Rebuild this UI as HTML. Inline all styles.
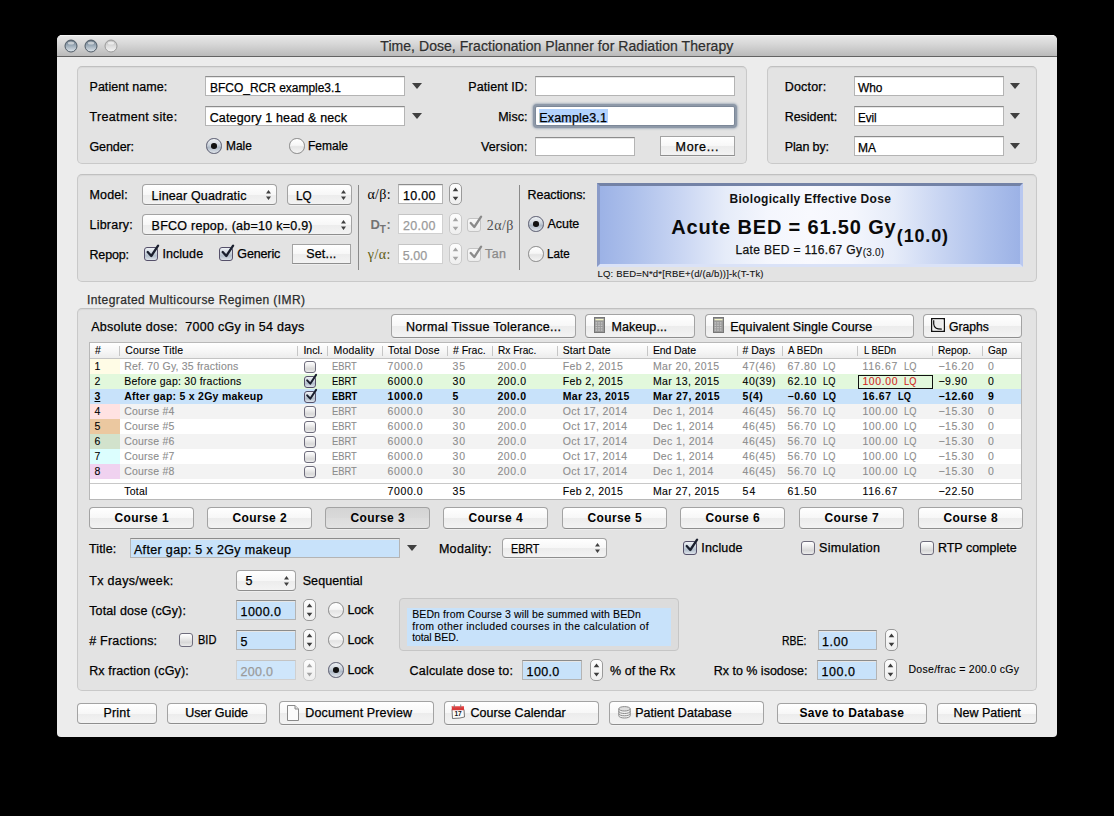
<!DOCTYPE html><html><head><meta charset="utf-8"><style>
html,body{margin:0;padding:0;background:#000;width:1114px;height:816px;overflow:hidden;position:relative;font-family:"Liberation Sans",sans-serif}
.t{position:absolute;white-space:pre;line-height:1;font-family:"Liberation Sans",sans-serif}
</style></head><body>
<div style="position:absolute;left:57px;top:35px;width:1000px;height:702px;background:#ececec;border-radius:5px 5px 4px 4px;overflow:hidden"><div style="position:absolute;left:0;top:0;width:1000px;height:21px;background:linear-gradient(#e9e9e9,#d6d6d6 45%,#bababa);border-bottom:1px solid #626262"></div></div>
<div style="position:absolute;left:60px;top:35px;width:994px;height:1px;background:rgba(255,255,255,.55)"></div>
<svg style="position:absolute;left:60px;top:35px" width="60" height="22"><defs><linearGradient id="tg" x1="0" y1="0" x2="0" y2="1"><stop offset="0" stop-color="#5f6e7c"/><stop offset="0.45" stop-color="#9aa9b6"/><stop offset="1" stop-color="#dfe6ec"/></linearGradient><linearGradient id="tw" x1="0" y1="0" x2="0" y2="1"><stop offset="0" stop-color="#b8b8b8"/><stop offset="0.5" stop-color="#dcdcdc"/><stop offset="1" stop-color="#f6f6f6"/></linearGradient></defs><circle cx="11" cy="11" r="6" fill="url(#tg)" stroke="#4e5a66" stroke-width="1"/><ellipse cx="11" cy="8" rx="3.2" ry="1.6" fill="#fff" opacity=".55"/><circle cx="31" cy="11" r="6" fill="url(#tg)" stroke="#4e5a66" stroke-width="1"/><ellipse cx="31" cy="8" rx="3.2" ry="1.6" fill="#fff" opacity=".55"/><circle cx="51" cy="11" r="6" fill="url(#tw)" stroke="#9a9a9a" stroke-width="1"/><ellipse cx="51" cy="8" rx="3.2" ry="1.6" fill="#fff" opacity=".6"/></svg>
<div class="t" style="top:39.00px;font-size:14px;color:#2e2e2e;letter-spacing:0.052px;-webkit-text-stroke:0.25px #2e2e2e;left:380.30px;text-shadow:0 1px 0 rgba(255,255,255,.45);">Time, Dose, Fractionation Planner for Radiation Therapy</div>
<div style="position:absolute;left:77px;top:66px;width:670px;height:98px;box-sizing:border-box;background:#e3e3e3;border:1px solid #c9c9c9;border-top-color:#c0c0c0;border-radius:5px;box-shadow:inset 0 1px 1px rgba(0,0,0,.05);"></div>
<div style="position:absolute;left:767px;top:66px;width:270px;height:98px;box-sizing:border-box;background:#e3e3e3;border:1px solid #c9c9c9;border-top-color:#c0c0c0;border-radius:5px;box-shadow:inset 0 1px 1px rgba(0,0,0,.05);"></div>
<div class="t" style="top:81.00px;font-size:12.5px;color:#000;letter-spacing:0.039px;-webkit-text-stroke:0.25px #000;left:89.50px;">Patient name:</div>
<div class="t" style="top:111.00px;font-size:12.5px;color:#000;letter-spacing:0.336px;-webkit-text-stroke:0.25px #000;left:89.50px;">Treatment site:</div>
<div class="t" style="top:141.00px;font-size:12.5px;color:#000;letter-spacing:-0.111px;-webkit-text-stroke:0.25px #000;left:89.50px;">Gender:</div>
<div style="position:absolute;left:205px;top:76px;width:200px;height:20px;box-sizing:border-box;background:#fff;border:1px solid #b4b4b4;border-top-color:#8c8c8c;box-shadow:inset 0 1px 0 #e6e6e6;"></div>
<div style="position:absolute;left:205px;top:106px;width:200px;height:20px;box-sizing:border-box;background:#fff;border:1px solid #b4b4b4;border-top-color:#8c8c8c;box-shadow:inset 0 1px 0 #e6e6e6;"></div>
<div class="t" style="top:82.00px;font-size:12.5px;color:#000;-webkit-text-stroke:0.25px #000;left:209.70px;transform:scaleX(0.9572);transform-origin:0 0;">BFCO_RCR example3.1</div>
<div class="t" style="top:112.00px;font-size:12.5px;color:#000;letter-spacing:0.152px;-webkit-text-stroke:0.25px #000;left:209.70px;">Category 1 head &amp; neck</div>
<svg style="position:absolute;left:411.5px;top:82.5px" width="10" height="7"><path d="M0 0 L10 0 L5 6 Z" fill="#404040"/></svg>
<svg style="position:absolute;left:411.5px;top:112.5px" width="10" height="7"><path d="M0 0 L10 0 L5 6 Z" fill="#404040"/></svg>
<div style="position:absolute;left:206.25px;top:138.25px;width:15.5px;height:15.5px;box-sizing:border-box;background:linear-gradient(#eef1f4,#d0d7df 40%,#aeb9c6 60%,#dfe4ea);border:1px solid #5a5c70;border-radius:50%;"></div>
<div style="position:absolute;left:211.2px;top:143.2px;width:5.600000000000023px;height:5.600000000000023px;box-sizing:border-box;background:#111;border-radius:50%;"></div>
<div class="t" style="top:140.00px;font-size:12.5px;color:#000;-webkit-text-stroke:0.25px #000;left:225.60px;transform:scaleX(0.9522);transform-origin:0 0;">Male</div>
<div style="position:absolute;left:289.05px;top:138.25px;width:15.5px;height:15.5px;box-sizing:border-box;background:linear-gradient(#ffffff,#f6f6f6 45%,#e4e4e4 55%,#f4f4f4);border:1px solid #8a8a8a;border-radius:50%;"></div>
<div class="t" style="top:140.00px;font-size:12.5px;color:#000;-webkit-text-stroke:0.25px #000;left:308.40px;transform:scaleX(0.9597);transform-origin:0 0;">Female</div>
<div class="t" style="top:81.00px;font-size:12.5px;color:#000;letter-spacing:0.074px;-webkit-text-stroke:0.25px #000;left:468.30px;">Patient ID:</div>
<div class="t" style="top:111.00px;font-size:12.5px;color:#000;letter-spacing:0.009px;-webkit-text-stroke:0.25px #000;left:498.20px;">Misc:</div>
<div class="t" style="top:141.00px;font-size:12.5px;color:#000;letter-spacing:0.191px;-webkit-text-stroke:0.25px #000;left:480.90px;">Version:</div>
<div style="position:absolute;left:535px;top:76px;width:200px;height:20px;box-sizing:border-box;background:#fff;border:1px solid #b4b4b4;border-top-color:#8c8c8c;box-shadow:inset 0 1px 0 #e6e6e6;"></div>
<div style="position:absolute;left:535px;top:106px;width:200px;height:20px;box-sizing:border-box;background:#fff;border:1px solid #b4b4b4;border-top-color:#8c8c8c;box-shadow:inset 0 1px 0 #e6e6e6;border-radius:2px;border-color:#7c8898;box-shadow:0 0 0 2px #8e99a8, 0 0 2px 3px rgba(130,145,165,.55);"></div>
<div style="position:absolute;left:538.7px;top:109px;width:69.59999999999991px;height:14.299999999999997px;box-sizing:border-box;background:#b3d3fd;"></div>
<div class="t" style="top:112.00px;font-size:12.5px;color:#000;letter-spacing:0.199px;-webkit-text-stroke:0.25px #000;left:539.20px;">Example3.1</div>
<div style="position:absolute;left:535px;top:137px;width:100px;height:19px;box-sizing:border-box;background:#fff;border:1px solid #b4b4b4;border-top-color:#8c8c8c;box-shadow:inset 0 1px 0 #e6e6e6;"></div>
<div style="position:absolute;left:660px;top:136px;width:75px;height:20px;box-sizing:border-box;background:linear-gradient(#ffffff,#f7f7f7 50%,#ececec 51%,#f3f3f3);border:1px solid #a3a3a3;border-bottom-color:#8e8e8e;border-radius:0;box-shadow:0 1px 0 rgba(255,255,255,.4);"></div>
<div class="t" style="top:141.00px;font-size:12.5px;color:#000;letter-spacing:0.650px;-webkit-text-stroke:0.25px #000;left:675.60px;">More...</div>
<div class="t" style="top:81.00px;font-size:12.5px;color:#000;letter-spacing:0.202px;-webkit-text-stroke:0.25px #000;left:784.70px;">Doctor:</div>
<div class="t" style="top:111.00px;font-size:12.5px;color:#000;letter-spacing:-0.038px;-webkit-text-stroke:0.25px #000;left:784.70px;">Resident:</div>
<div class="t" style="top:141.00px;font-size:12.5px;color:#000;letter-spacing:-0.124px;-webkit-text-stroke:0.25px #000;left:784.70px;">Plan by:</div>
<div style="position:absolute;left:854px;top:76px;width:150px;height:20px;box-sizing:border-box;background:#fff;border:1px solid #b4b4b4;border-top-color:#8c8c8c;box-shadow:inset 0 1px 0 #e6e6e6;"></div>
<div class="t" style="top:82.00px;font-size:12.5px;color:#000;-webkit-text-stroke:0.25px #000;left:858.20px;transform:scaleX(0.9532);transform-origin:0 0;">Who</div>
<svg style="position:absolute;left:1009.5px;top:82.5px" width="10" height="7"><path d="M0 0 L10 0 L5 6 Z" fill="#404040"/></svg>
<div style="position:absolute;left:854px;top:106px;width:150px;height:20px;box-sizing:border-box;background:#fff;border:1px solid #b4b4b4;border-top-color:#8c8c8c;box-shadow:inset 0 1px 0 #e6e6e6;"></div>
<div class="t" style="top:112.00px;font-size:12.5px;color:#000;-webkit-text-stroke:0.25px #000;left:858.20px;transform:scaleX(0.9284);transform-origin:0 0;">Evil</div>
<svg style="position:absolute;left:1009.5px;top:112.5px" width="10" height="7"><path d="M0 0 L10 0 L5 6 Z" fill="#404040"/></svg>
<div style="position:absolute;left:854px;top:136px;width:150px;height:20px;box-sizing:border-box;background:#fff;border:1px solid #b4b4b4;border-top-color:#8c8c8c;box-shadow:inset 0 1px 0 #e6e6e6;"></div>
<div class="t" style="top:142.00px;font-size:12.5px;color:#000;-webkit-text-stroke:0.25px #000;left:858.20px;transform:scaleX(0.9600);transform-origin:0 0;">MA</div>
<svg style="position:absolute;left:1009.5px;top:142.5px" width="10" height="7"><path d="M0 0 L10 0 L5 6 Z" fill="#404040"/></svg>
<div style="position:absolute;left:77px;top:174px;width:960px;height:108px;box-sizing:border-box;background:#e3e3e3;border:1px solid #c9c9c9;border-top-color:#c0c0c0;border-radius:5px;box-shadow:inset 0 1px 1px rgba(0,0,0,.05);"></div>
<div class="t" style="top:189.00px;font-size:12.5px;color:#000;letter-spacing:0.136px;-webkit-text-stroke:0.25px #000;left:89.50px;">Model:</div>
<div class="t" style="top:219.00px;font-size:12.5px;color:#000;letter-spacing:0.217px;-webkit-text-stroke:0.25px #000;left:89.50px;">Library:</div>
<div class="t" style="top:249.00px;font-size:12.5px;color:#000;letter-spacing:-0.162px;-webkit-text-stroke:0.25px #000;left:89.50px;">Repop:</div>
<div style="position:absolute;left:142px;top:184px;width:135px;height:21px;box-sizing:border-box;background:linear-gradient(#ffffff,#f7f7f7 50%,#ececec 51%,#f3f3f3);border:1px solid #a3a3a3;border-bottom-color:#8e8e8e;border-radius:4px;box-shadow:0 1px 0 rgba(255,255,255,.4);"></div>
<svg style="position:absolute;left:264.5px;top:188.5px" width="7" height="12"><path d="M1 4.5 L3.5 1 L6 4.5 Z M1 7.5 L3.5 11 L6 7.5 Z" fill="#404040"/></svg>
<div class="t" style="top:190.00px;font-size:12.5px;color:#000;letter-spacing:0.159px;-webkit-text-stroke:0.25px #000;left:151.60px;">Linear Quadratic</div>
<div style="position:absolute;left:287px;top:184px;width:65px;height:21px;box-sizing:border-box;background:linear-gradient(#ffffff,#f7f7f7 50%,#ececec 51%,#f3f3f3);border:1px solid #a3a3a3;border-bottom-color:#8e8e8e;border-radius:4px;box-shadow:0 1px 0 rgba(255,255,255,.4);"></div>
<svg style="position:absolute;left:339.5px;top:188.5px" width="7" height="12"><path d="M1 4.5 L3.5 1 L6 4.5 Z M1 7.5 L3.5 11 L6 7.5 Z" fill="#404040"/></svg>
<div class="t" style="top:190.00px;font-size:12.5px;color:#000;-webkit-text-stroke:0.25px #000;left:296.10px;transform:scaleX(0.9355);transform-origin:0 0;">LQ</div>
<div style="position:absolute;left:142px;top:214px;width:210px;height:21px;box-sizing:border-box;background:linear-gradient(#ffffff,#f7f7f7 50%,#ececec 51%,#f3f3f3);border:1px solid #a3a3a3;border-bottom-color:#8e8e8e;border-radius:4px;box-shadow:0 1px 0 rgba(255,255,255,.4);"></div>
<svg style="position:absolute;left:339.5px;top:218.5px" width="7" height="12"><path d="M1 4.5 L3.5 1 L6 4.5 Z M1 7.5 L3.5 11 L6 7.5 Z" fill="#404040"/></svg>
<div class="t" style="top:220.00px;font-size:12.5px;color:#000;letter-spacing:0.248px;-webkit-text-stroke:0.25px #000;left:151.60px;">BFCO repop. (ab=10 k=0.9)</div>
<div style="position:absolute;left:144px;top:247px;width:14px;height:14px;box-sizing:border-box;background:linear-gradient(#eef1f5,#d2dae3 35%,#b4c0cd 65%,#dde3ea);border:1px solid #55506a;border-radius:3px;"></div>
<svg style="position:absolute;left:144px;top:243px;overflow:visible" width="18" height="18"><path d="M3.70 9.00 L7.30 13.00 L14.10 2.70" fill="none" stroke="#1a1f2e" stroke-width="2.30" stroke-linecap="round" stroke-linejoin="round"/></svg>
<div class="t" style="top:248.00px;font-size:12.5px;color:#000;letter-spacing:0.065px;-webkit-text-stroke:0.25px #000;left:162.40px;">Include</div>
<div style="position:absolute;left:219px;top:247px;width:14px;height:14px;box-sizing:border-box;background:linear-gradient(#eef1f5,#d2dae3 35%,#b4c0cd 65%,#dde3ea);border:1px solid #55506a;border-radius:3px;"></div>
<svg style="position:absolute;left:219px;top:243px;overflow:visible" width="18" height="18"><path d="M3.70 9.00 L7.30 13.00 L14.10 2.70" fill="none" stroke="#1a1f2e" stroke-width="2.30" stroke-linecap="round" stroke-linejoin="round"/></svg>
<div class="t" style="top:248.00px;font-size:12.5px;color:#000;letter-spacing:-0.128px;-webkit-text-stroke:0.25px #000;left:237.30px;">Generic</div>
<div style="position:absolute;left:292px;top:244px;width:59px;height:20px;box-sizing:border-box;background:linear-gradient(#ffffff,#f7f7f7 50%,#ececec 51%,#f3f3f3);border:1px solid #a3a3a3;border-bottom-color:#8e8e8e;border-radius:0;box-shadow:0 1px 0 rgba(255,255,255,.4);"></div>
<div class="t" style="top:248.00px;font-size:12.5px;color:#000;letter-spacing:0.184px;-webkit-text-stroke:0.25px #000;left:306.20px;">Set...</div>
<div style="position:absolute;left:358px;top:185px;width:1px;height:85px;box-sizing:border-box;background:#8a8a8a;"></div>
<div class="t" style="top:188.00px;font-size:14px;color:#000;font-family:'Liberation Serif',serif;letter-spacing:0.288px;left:367.50px;">α/β:</div>
<div class="t" style="top:218.00px;font-size:13px;color:#737373;font-weight:bold;left:370.50px;">D</div>
<div class="t" style="top:225.00px;font-size:10px;color:#737373;font-weight:bold;left:379.80px;">T</div>
<div class="t" style="top:219.00px;font-size:12.5px;color:#737373;font-weight:bold;left:386.50px;">:</div>
<div class="t" style="top:248.00px;font-size:14px;color:#5e5c12;font-family:'Liberation Serif',serif;letter-spacing:0.400px;left:367.80px;">γ/α:</div>
<div style="position:absolute;left:398px;top:184px;width:45px;height:20px;box-sizing:border-box;background:#fff;border:1px solid #b4b4b4;border-top-color:#8c8c8c;box-shadow:inset 0 1px 0 #e6e6e6;"></div>
<div class="t" style="top:190.00px;font-size:12.5px;color:#000;letter-spacing:0.255px;-webkit-text-stroke:0.25px #000;left:403.10px;">10.00</div>
<div style="position:absolute;left:398px;top:214px;width:45px;height:20px;box-sizing:border-box;background:#fff;border:1px solid #d0d0d0;border-top-color:#c4c4c4;"></div>
<div class="t" style="top:220.00px;font-size:12.5px;color:#9a9a9a;letter-spacing:0.255px;-webkit-text-stroke:0.25px #9a9a9a;left:403.10px;">20.00</div>
<div style="position:absolute;left:398px;top:244px;width:45px;height:20px;box-sizing:border-box;background:#fff;border:1px solid #d0d0d0;border-top-color:#c4c4c4;"></div>
<div class="t" style="top:250.00px;font-size:12.5px;color:#9a9a9a;letter-spacing:0.057px;-webkit-text-stroke:0.25px #9a9a9a;left:402.70px;">5.00</div>
<div style="position:absolute;left:449px;top:183px;width:13px;height:22px;box-sizing:border-box;background:linear-gradient(#fdfdfd,#eeeeee);border:1px solid #9a9a9a;border-radius:5px;"></div>
<svg style="position:absolute;left:449px;top:183px" width="13" height="22"><path d="M3.7 8.2 L6.5 4.5 L9.3 8.2 Z M3.7 13.8 L6.5 17.5 L9.3 13.8 Z" fill="#3c3c3c"/></svg>
<div style="position:absolute;left:449px;top:213px;width:13px;height:22px;box-sizing:border-box;background:linear-gradient(#fdfdfd,#eeeeee);border:1px solid #c9c9c9;border-radius:5px;"></div>
<svg style="position:absolute;left:449px;top:213px" width="13" height="22"><path d="M3.7 8.2 L6.5 4.5 L9.3 8.2 Z M3.7 13.8 L6.5 17.5 L9.3 13.8 Z" fill="#a4a4a4"/></svg>
<div style="position:absolute;left:449px;top:243px;width:13px;height:22px;box-sizing:border-box;background:linear-gradient(#fdfdfd,#eeeeee);border:1px solid #c9c9c9;border-radius:5px;"></div>
<svg style="position:absolute;left:449px;top:243px" width="13" height="22"><path d="M3.7 8.2 L6.5 4.5 L9.3 8.2 Z M3.7 13.8 L6.5 17.5 L9.3 13.8 Z" fill="#a4a4a4"/></svg>
<div style="position:absolute;left:467px;top:218px;width:14px;height:14px;box-sizing:border-box;background:linear-gradient(#f8f8f8,#ececec);border:1px solid #c4c4c4;border-radius:3px;"></div>
<svg style="position:absolute;left:467px;top:214px;overflow:visible" width="18" height="18"><path d="M3.70 9.00 L7.30 13.00 L14.10 2.70" fill="none" stroke="#8a8a8a" stroke-width="2.30" stroke-linecap="round" stroke-linejoin="round"/></svg>
<div class="t" style="top:219.00px;font-size:14px;color:#505050;font-family:'Liberation Serif',serif;letter-spacing:0.451px;left:486.70px;">2α/β</div>
<div style="position:absolute;left:467px;top:248px;width:14px;height:14px;box-sizing:border-box;background:linear-gradient(#f8f8f8,#ececec);border:1px solid #c4c4c4;border-radius:3px;"></div>
<svg style="position:absolute;left:467px;top:244px;overflow:visible" width="18" height="18"><path d="M3.70 9.00 L7.30 13.00 L14.10 2.70" fill="none" stroke="#8a8a8a" stroke-width="2.30" stroke-linecap="round" stroke-linejoin="round"/></svg>
<div class="t" style="top:248.00px;font-size:12.5px;color:#8a8a8a;letter-spacing:0.423px;-webkit-text-stroke:0.25px #8a8a8a;left:485.00px;">Tan</div>
<div style="position:absolute;left:519px;top:185px;width:1px;height:85px;box-sizing:border-box;background:#8a8a8a;"></div>
<div class="t" style="top:189.00px;font-size:12.5px;color:#000;letter-spacing:-0.095px;-webkit-text-stroke:0.25px #000;left:527.60px;">Reactions:</div>
<div style="position:absolute;left:528.25px;top:216.25px;width:15.5px;height:15.5px;box-sizing:border-box;background:linear-gradient(#eef1f4,#d0d7df 40%,#aeb9c6 60%,#dfe4ea);border:1px solid #5a5c70;border-radius:50%;"></div>
<div style="position:absolute;left:533.2px;top:221.2px;width:5.599999999999909px;height:5.600000000000023px;box-sizing:border-box;background:#111;border-radius:50%;"></div>
<div class="t" style="top:218.00px;font-size:12.5px;color:#000;letter-spacing:-0.016px;-webkit-text-stroke:0.25px #000;left:547.40px;">Acute</div>
<div style="position:absolute;left:528.25px;top:246.25px;width:15.5px;height:15.5px;box-sizing:border-box;background:linear-gradient(#ffffff,#f6f6f6 45%,#e4e4e4 55%,#f4f4f4);border:1px solid #8a8a8a;border-radius:50%;"></div>
<div class="t" style="top:248.00px;font-size:12.5px;color:#000;-webkit-text-stroke:0.25px #000;left:547.40px;transform:scaleX(0.9289);transform-origin:0 0;">Late</div>
<div style="position:absolute;left:597px;top:183px;width:426px;height:84px;box-sizing:border-box;background:linear-gradient(90deg,#9cb2e6 0%,#adc0eb 8%,#cbd7f3 20%,#e6ecf9 30%,#f4f6fd 40%,#f8f9fe 50%,#f4f6fd 60%,#e6ecf9 70%,#cbd7f3 80%,#adc0eb 92%,#9cb2e6 100%);border-top:3px solid #7382a6;border-left:3px solid #8a9bc8;border-right:3px solid #b9c8f0;border-bottom:3px solid #dae2f7"></div>
<div class="t" style="top:193.00px;font-size:12px;color:#111;font-weight:bold;letter-spacing:0.305px;left:729.50px;">Biologically Effective Dose</div>
<div class="t" style="top:217.00px;font-size:20px;color:#0a0a0a;font-weight:bold;letter-spacing:0.841px;left:671.30px;">Acute BED = 61.50 Gy</div>
<div class="t" style="top:227.00px;font-size:18px;color:#0a0a0a;font-weight:bold;letter-spacing:0.836px;left:896.80px;">(10.0)</div>
<div class="t" style="top:244.00px;font-size:12px;color:#111;letter-spacing:0.373px;-webkit-text-stroke:0.25px #111;left:735.40px;">Late BED = 116.67 Gy</div>
<div class="t" style="top:248.00px;font-size:10px;color:#111;letter-spacing:0.185px;-webkit-text-stroke:0.1px #111;left:862.70px;">(3.0)</div>
<div class="t" style="top:269.00px;font-size:9.5px;color:#111;letter-spacing:0.178px;-webkit-text-stroke:0.1px #111;left:597.50px;">LQ: BED=N*d*[RBE+(d/(a/b))]-k(T-Tk)</div>
<div class="t" style="top:294.00px;font-size:12px;color:#2c2c2c;letter-spacing:0.417px;-webkit-text-stroke:0.25px #2c2c2c;left:87.00px;">Integrated Multicourse Regimen (IMR)</div>
<div style="position:absolute;left:77px;top:308px;width:960px;height:383px;box-sizing:border-box;background:#e3e3e3;border:1px solid #c9c9c9;border-top-color:#c0c0c0;border-radius:5px;box-shadow:inset 0 1px 1px rgba(0,0,0,.05);"></div>
<div class="t" style="top:321.00px;font-size:12.5px;color:#000;letter-spacing:0.276px;-webkit-text-stroke:0.25px #000;left:91.20px;">Absolute dose:  7000 cGy in 54 days</div>
<div style="position:absolute;left:391px;top:314px;width:185px;height:24px;box-sizing:border-box;background:linear-gradient(#ffffff,#f7f7f7 50%,#ececec 51%,#f3f3f3);border:1px solid #a3a3a3;border-bottom-color:#8e8e8e;border-radius:4px;box-shadow:0 1px 0 rgba(255,255,255,.4);"></div>
<div class="t" style="top:321.00px;font-size:12.5px;color:#000;letter-spacing:0.290px;-webkit-text-stroke:0.25px #000;left:406.00px;">Normal Tissue Tolerance...</div>
<div style="position:absolute;left:585px;top:314px;width:110px;height:24px;box-sizing:border-box;background:linear-gradient(#ffffff,#f7f7f7 50%,#ececec 51%,#f3f3f3);border:1px solid #a3a3a3;border-bottom-color:#8e8e8e;border-radius:4px;box-shadow:0 1px 0 rgba(255,255,255,.4);"></div>
<svg style="position:absolute;left:594px;top:317px" width="11" height="16"><rect x="0.5" y="0.5" width="10" height="15" fill="#9a9a9a" stroke="#777"/><rect x="1.5" y="2" width="8" height="1.3" fill="#f4f6c8"/><rect x="1.6" y="5.2" width="1.6" height="1.4" fill="#c4c4c4"/><rect x="4.2" y="5.2" width="1.6" height="1.4" fill="#c4c4c4"/><rect x="6.8" y="5.2" width="1.6" height="1.4" fill="#c4c4c4"/><rect x="1.6" y="7.6" width="1.6" height="1.4" fill="#c4c4c4"/><rect x="4.2" y="7.6" width="1.6" height="1.4" fill="#c4c4c4"/><rect x="6.8" y="7.6" width="1.6" height="1.4" fill="#c4c4c4"/><rect x="1.6" y="10.0" width="1.6" height="1.4" fill="#c4c4c4"/><rect x="4.2" y="10.0" width="1.6" height="1.4" fill="#c4c4c4"/><rect x="6.8" y="10.0" width="1.6" height="1.4" fill="#c4c4c4"/><rect x="1.6" y="12.4" width="1.6" height="1.4" fill="#c4c4c4"/><rect x="4.2" y="12.4" width="1.6" height="1.4" fill="#c4c4c4"/><rect x="6.8" y="12.4" width="1.6" height="1.4" fill="#c4c4c4"/></svg>
<div class="t" style="top:321.00px;font-size:12.5px;color:#000;letter-spacing:0.089px;-webkit-text-stroke:0.25px #000;left:611.40px;">Makeup...</div>
<div style="position:absolute;left:705px;top:314px;width:209px;height:24px;box-sizing:border-box;background:linear-gradient(#ffffff,#f7f7f7 50%,#ececec 51%,#f3f3f3);border:1px solid #a3a3a3;border-bottom-color:#8e8e8e;border-radius:4px;box-shadow:0 1px 0 rgba(255,255,255,.4);"></div>
<svg style="position:absolute;left:713px;top:317px" width="11" height="16"><rect x="0.5" y="0.5" width="10" height="15" fill="#9a9a9a" stroke="#777"/><rect x="1.5" y="2" width="8" height="1.3" fill="#f4f6c8"/><rect x="1.6" y="5.2" width="1.6" height="1.4" fill="#c4c4c4"/><rect x="4.2" y="5.2" width="1.6" height="1.4" fill="#c4c4c4"/><rect x="6.8" y="5.2" width="1.6" height="1.4" fill="#c4c4c4"/><rect x="1.6" y="7.6" width="1.6" height="1.4" fill="#c4c4c4"/><rect x="4.2" y="7.6" width="1.6" height="1.4" fill="#c4c4c4"/><rect x="6.8" y="7.6" width="1.6" height="1.4" fill="#c4c4c4"/><rect x="1.6" y="10.0" width="1.6" height="1.4" fill="#c4c4c4"/><rect x="4.2" y="10.0" width="1.6" height="1.4" fill="#c4c4c4"/><rect x="6.8" y="10.0" width="1.6" height="1.4" fill="#c4c4c4"/><rect x="1.6" y="12.4" width="1.6" height="1.4" fill="#c4c4c4"/><rect x="4.2" y="12.4" width="1.6" height="1.4" fill="#c4c4c4"/><rect x="6.8" y="12.4" width="1.6" height="1.4" fill="#c4c4c4"/></svg>
<div class="t" style="top:321.00px;font-size:12.5px;color:#000;letter-spacing:0.071px;-webkit-text-stroke:0.25px #000;left:730.20px;">Equivalent Single Course</div>
<div style="position:absolute;left:923px;top:314px;width:99px;height:24px;box-sizing:border-box;background:linear-gradient(#ffffff,#f7f7f7 50%,#ececec 51%,#f3f3f3);border:1px solid #a3a3a3;border-bottom-color:#8e8e8e;border-radius:4px;box-shadow:0 1px 0 rgba(255,255,255,.4);"></div>
<svg style="position:absolute;left:931px;top:318px" width="14" height="14"><rect x="0.7" y="0.7" width="12.6" height="12.6" fill="#ececec" stroke="#111" stroke-width="1.4"/><rect x="1.9" y="1.9" width="10.2" height="10.2" fill="none" stroke="#fafafa" stroke-width="0.8"/><path d="M2.7 2.3 L2.7 6 Q2.9 9 5.2 10.3 Q6.5 11.2 10.8 11.2" fill="none" stroke="#111" stroke-width="1.2"/></svg>
<div class="t" style="top:321.00px;font-size:12.5px;color:#000;-webkit-text-stroke:0.25px #000;left:949.20px;transform:scaleX(0.9734);transform-origin:0 0;">Graphs</div>
<div style="position:absolute;left:89px;top:342px;width:933px;height:158px;box-sizing:border-box;background:#fff;border:1px solid #b8b8b8;"></div>
<div style="position:absolute;left:90px;top:343px;width:931px;height:16px;box-sizing:border-box;background:linear-gradient(#ffffff,#f6f6f6 55%,#ececec);border-bottom:1px solid #c4c4c4;"></div>
<div style="position:absolute;left:119px;top:346px;width:1px;height:10px;box-sizing:border-box;background:#c6c6c6;"></div>
<div style="position:absolute;left:297px;top:346px;width:1px;height:10px;box-sizing:border-box;background:#c6c6c6;"></div>
<div style="position:absolute;left:327px;top:346px;width:1px;height:10px;box-sizing:border-box;background:#c6c6c6;"></div>
<div style="position:absolute;left:382px;top:346px;width:1px;height:10px;box-sizing:border-box;background:#c6c6c6;"></div>
<div style="position:absolute;left:447px;top:346px;width:1px;height:10px;box-sizing:border-box;background:#c6c6c6;"></div>
<div style="position:absolute;left:492px;top:346px;width:1px;height:10px;box-sizing:border-box;background:#c6c6c6;"></div>
<div style="position:absolute;left:557px;top:346px;width:1px;height:10px;box-sizing:border-box;background:#c6c6c6;"></div>
<div style="position:absolute;left:647px;top:346px;width:1px;height:10px;box-sizing:border-box;background:#c6c6c6;"></div>
<div style="position:absolute;left:737px;top:346px;width:1px;height:10px;box-sizing:border-box;background:#c6c6c6;"></div>
<div style="position:absolute;left:782px;top:346px;width:1px;height:10px;box-sizing:border-box;background:#c6c6c6;"></div>
<div style="position:absolute;left:857px;top:346px;width:1px;height:10px;box-sizing:border-box;background:#c6c6c6;"></div>
<div style="position:absolute;left:932px;top:346px;width:1px;height:10px;box-sizing:border-box;background:#c6c6c6;"></div>
<div style="position:absolute;left:982px;top:346px;width:1px;height:10px;box-sizing:border-box;background:#c6c6c6;"></div>
<div class="t" style="top:345.00px;font-size:10.5px;color:#000;-webkit-text-stroke:0.1px #000;left:94.90px;">#</div>
<div class="t" style="top:345.00px;font-size:10.5px;color:#000;letter-spacing:0.171px;-webkit-text-stroke:0.1px #000;left:125.20px;">Course Title</div>
<div class="t" style="top:345.00px;font-size:10.5px;color:#000;letter-spacing:0.011px;-webkit-text-stroke:0.1px #000;left:303.40px;">Incl.</div>
<div class="t" style="top:345.00px;font-size:10.5px;color:#000;letter-spacing:0.229px;-webkit-text-stroke:0.1px #000;left:333.50px;">Modality</div>
<div class="t" style="top:345.00px;font-size:10.5px;color:#000;letter-spacing:0.221px;-webkit-text-stroke:0.1px #000;left:388.00px;">Total Dose</div>
<div class="t" style="top:345.00px;font-size:10.5px;color:#000;letter-spacing:0.004px;-webkit-text-stroke:0.1px #000;left:452.90px;"># Frac.</div>
<div class="t" style="top:345.00px;font-size:10.5px;color:#000;-webkit-text-stroke:0.1px #000;left:498.10px;transform:scaleX(0.9630);transform-origin:0 0;">Rx Frac.</div>
<div class="t" style="top:345.00px;font-size:10.5px;color:#000;letter-spacing:0.059px;-webkit-text-stroke:0.1px #000;left:562.70px;">Start Date</div>
<div class="t" style="top:345.00px;font-size:10.5px;color:#000;letter-spacing:-0.097px;-webkit-text-stroke:0.1px #000;left:652.90px;">End Date</div>
<div class="t" style="top:345.00px;font-size:10.5px;color:#000;letter-spacing:-0.036px;-webkit-text-stroke:0.1px #000;left:742.60px;"># Days</div>
<div class="t" style="top:345.00px;font-size:10.5px;color:#000;-webkit-text-stroke:0.1px #000;left:788.20px;transform:scaleX(0.9410);transform-origin:0 0;">A BEDn</div>
<div class="t" style="top:345.00px;font-size:10.5px;color:#000;-webkit-text-stroke:0.1px #000;left:863.70px;transform:scaleX(0.8939);transform-origin:0 0;">L BEDn</div>
<div class="t" style="top:345.00px;font-size:10.5px;color:#000;-webkit-text-stroke:0.1px #000;left:938.40px;transform:scaleX(0.9687);transform-origin:0 0;">Repop.</div>
<div class="t" style="top:345.00px;font-size:10.5px;color:#000;-webkit-text-stroke:0.1px #000;left:987.90px;transform:scaleX(0.9573);transform-origin:0 0;">Gap</div>
<div style="position:absolute;left:90px;top:359px;width:931px;height:15px;box-sizing:border-box;background:#ffffff;"></div>
<div style="position:absolute;left:90px;top:359px;width:30px;height:15px;box-sizing:border-box;background:#fffce6;"></div>
<div class="t" style="top:361.00px;font-size:10.5px;color:#000;-webkit-text-stroke:0.1px #000;left:94.50px;">1</div>
<div class="t" style="top:361.00px;font-size:10.5px;color:#8c8c8c;letter-spacing:0.195px;-webkit-text-stroke:0.1px #8c8c8c;left:124.20px;">Ref. 70 Gy, 35 fractions</div>
<div style="position:absolute;left:304px;top:361px;width:12px;height:12px;box-sizing:border-box;background:linear-gradient(#ffffff,#f0f0f0 30%,#d8d8d8 70%,#ececec);border:1px solid #6e6c7c;border-radius:3px;"></div>
<div class="t" style="top:361.00px;font-size:10.5px;color:#8c8c8c;-webkit-text-stroke:0.1px #8c8c8c;left:332.30px;transform:scaleX(0.8887);transform-origin:0 0;">EBRT</div>
<div class="t" style="top:361.00px;font-size:10.5px;color:#8c8c8c;letter-spacing:0.592px;-webkit-text-stroke:0.1px #8c8c8c;left:387.60px;">7000.0</div>
<div class="t" style="top:361.00px;font-size:10.5px;color:#8c8c8c;letter-spacing:1.129px;-webkit-text-stroke:0.1px #8c8c8c;left:452.40px;">35</div>
<div class="t" style="top:361.00px;font-size:10.5px;color:#8c8c8c;letter-spacing:0.598px;-webkit-text-stroke:0.1px #8c8c8c;left:497.40px;">200.0</div>
<div class="t" style="top:361.00px;font-size:10.5px;color:#8c8c8c;letter-spacing:0.403px;-webkit-text-stroke:0.1px #8c8c8c;left:562.70px;">Feb 2, 2015</div>
<div class="t" style="top:361.00px;font-size:10.5px;color:#8c8c8c;letter-spacing:0.385px;-webkit-text-stroke:0.1px #8c8c8c;left:652.90px;">Mar 20, 2015</div>
<div class="t" style="top:361.00px;font-size:10.5px;color:#8c8c8c;letter-spacing:0.516px;-webkit-text-stroke:0.1px #8c8c8c;left:742.60px;">47(46)</div>
<div class="t" style="top:361.00px;font-size:10.5px;color:#8c8c8c;letter-spacing:0.598px;-webkit-text-stroke:0.1px #8c8c8c;left:787.60px;">67.80</div>
<div class="t" style="top:361.00px;font-size:10.5px;color:#8c8c8c;-webkit-text-stroke:0.1px #8c8c8c;left:822.80px;transform:scaleX(0.8827);transform-origin:0 0;">LQ</div>
<div class="t" style="top:361.00px;font-size:10.5px;color:#8c8c8c;letter-spacing:0.747px;-webkit-text-stroke:0.1px #8c8c8c;left:862.40px;">116.67</div>
<div class="t" style="top:361.00px;font-size:10.5px;color:#8c8c8c;-webkit-text-stroke:0.1px #8c8c8c;left:903.50px;transform:scaleX(0.8827);transform-origin:0 0;">LQ</div>
<div class="t" style="top:361.00px;font-size:10.5px;color:#8c8c8c;letter-spacing:0.536px;-webkit-text-stroke:0.1px #8c8c8c;left:938.40px;">−16.20</div>
<div class="t" style="top:361.00px;font-size:10.5px;color:#8c8c8c;-webkit-text-stroke:0.1px #8c8c8c;left:988.00px;">0</div>
<div style="position:absolute;left:90px;top:374px;width:931px;height:15px;box-sizing:border-box;background:#e2f8dc;"></div>
<div style="position:absolute;left:90px;top:374px;width:30px;height:15px;box-sizing:border-box;background:#e2f8dc;"></div>
<div class="t" style="top:376.00px;font-size:10.5px;color:#000;-webkit-text-stroke:0.1px #000;left:94.50px;">2</div>
<div class="t" style="top:376.00px;font-size:10.5px;color:#000;letter-spacing:0.244px;-webkit-text-stroke:0.1px #000;left:124.20px;">Before gap: 30 fractions</div>
<div style="position:absolute;left:304px;top:376px;width:12px;height:12px;box-sizing:border-box;background:linear-gradient(#eef1f5,#d2dae3 35%,#b4c0cd 65%,#dde3ea);border:1px solid #55506a;border-radius:3px;"></div>
<svg style="position:absolute;left:304px;top:372px;overflow:visible" width="16" height="16"><path d="M3.17 8.29 L6.26 11.71 L12.09 2.89" fill="none" stroke="#1a1f2e" stroke-width="1.97" stroke-linecap="round" stroke-linejoin="round"/></svg>
<div class="t" style="top:376.00px;font-size:10.5px;color:#000;-webkit-text-stroke:0.1px #000;left:332.30px;transform:scaleX(0.8887);transform-origin:0 0;">EBRT</div>
<div class="t" style="top:376.00px;font-size:10.5px;color:#000;letter-spacing:0.592px;-webkit-text-stroke:0.1px #000;left:387.60px;">6000.0</div>
<div class="t" style="top:376.00px;font-size:10.5px;color:#000;letter-spacing:1.129px;-webkit-text-stroke:0.1px #000;left:452.40px;">30</div>
<div class="t" style="top:376.00px;font-size:10.5px;color:#000;letter-spacing:0.598px;-webkit-text-stroke:0.1px #000;left:497.40px;">200.0</div>
<div class="t" style="top:376.00px;font-size:10.5px;color:#000;letter-spacing:0.403px;-webkit-text-stroke:0.1px #000;left:562.70px;">Feb 2, 2015</div>
<div class="t" style="top:376.00px;font-size:10.5px;color:#000;letter-spacing:0.385px;-webkit-text-stroke:0.1px #000;left:652.90px;">Mar 13, 2015</div>
<div class="t" style="top:376.00px;font-size:10.5px;color:#000;letter-spacing:0.516px;-webkit-text-stroke:0.1px #000;left:742.60px;">40(39)</div>
<div class="t" style="top:376.00px;font-size:10.5px;color:#000;letter-spacing:0.598px;-webkit-text-stroke:0.1px #000;left:787.60px;">62.10</div>
<div class="t" style="top:376.00px;font-size:10.5px;color:#000;-webkit-text-stroke:0.1px #000;left:822.80px;transform:scaleX(0.8827);transform-origin:0 0;">LQ</div>
<div class="t" style="top:376.00px;font-size:10.5px;color:#d0281e;letter-spacing:0.592px;-webkit-text-stroke:0.1px #d0281e;left:862.40px;">100.00</div>
<div class="t" style="top:376.00px;font-size:10.5px;color:#d0281e;-webkit-text-stroke:0.1px #d0281e;left:903.50px;transform:scaleX(0.8827);transform-origin:0 0;">LQ</div>
<div class="t" style="top:376.00px;font-size:10.5px;color:#000;letter-spacing:0.528px;-webkit-text-stroke:0.1px #000;left:938.40px;">−9.90</div>
<div class="t" style="top:376.00px;font-size:10.5px;color:#000;-webkit-text-stroke:0.1px #000;left:988.00px;">0</div>
<div style="position:absolute;left:858px;top:374.5px;width:75px;height:14.5px;box-sizing:border-box;border:1px solid #111;"></div>
<div style="position:absolute;left:90px;top:389px;width:931px;height:15px;box-sizing:border-box;background:#c8e2fa;"></div>
<div style="position:absolute;left:90px;top:389px;width:30px;height:15px;box-sizing:border-box;background:#c8e2fa;"></div>
<div class="t" style="top:391.00px;font-size:10.5px;color:#000;font-weight:bold;left:94.50px;text-decoration:underline;">3</div>
<div class="t" style="top:391.00px;font-size:10.5px;color:#000;font-weight:bold;letter-spacing:0.259px;left:124.20px;">After gap: 5 x 2Gy makeup</div>
<div style="position:absolute;left:304px;top:391px;width:12px;height:12px;box-sizing:border-box;background:linear-gradient(#eef1f5,#d2dae3 35%,#b4c0cd 65%,#dde3ea);border:1px solid #55506a;border-radius:3px;"></div>
<svg style="position:absolute;left:304px;top:387px;overflow:visible" width="16" height="16"><path d="M3.17 8.29 L6.26 11.71 L12.09 2.89" fill="none" stroke="#1a1f2e" stroke-width="1.97" stroke-linecap="round" stroke-linejoin="round"/></svg>
<div class="t" style="top:391.00px;font-size:10.5px;color:#000;font-weight:bold;left:332.30px;transform:scaleX(0.8827);transform-origin:0 0;">EBRT</div>
<div class="t" style="top:391.00px;font-size:10.5px;color:#000;font-weight:bold;letter-spacing:0.592px;left:387.60px;">1000.0</div>
<div class="t" style="top:391.00px;font-size:10.5px;color:#000;font-weight:bold;left:452.40px;">5</div>
<div class="t" style="top:391.00px;font-size:10.5px;color:#000;font-weight:bold;letter-spacing:0.598px;left:497.40px;">200.0</div>
<div class="t" style="top:391.00px;font-size:10.5px;color:#000;font-weight:bold;letter-spacing:0.387px;left:562.70px;">Mar 23, 2015</div>
<div class="t" style="top:391.00px;font-size:10.5px;color:#000;font-weight:bold;letter-spacing:0.387px;left:652.90px;">Mar 27, 2015</div>
<div class="t" style="top:391.00px;font-size:10.5px;color:#000;font-weight:bold;letter-spacing:0.484px;left:742.60px;">5(4)</div>
<div class="t" style="top:391.00px;font-size:10.5px;color:#000;font-weight:bold;letter-spacing:0.528px;left:787.60px;">−0.60</div>
<div class="t" style="top:391.00px;font-size:10.5px;color:#000;font-weight:bold;left:822.80px;transform:scaleX(0.8827);transform-origin:0 0;">LQ</div>
<div class="t" style="top:391.00px;font-size:10.5px;color:#000;font-weight:bold;letter-spacing:0.598px;left:862.40px;">16.67</div>
<div class="t" style="top:391.00px;font-size:10.5px;color:#000;font-weight:bold;left:897.50px;transform:scaleX(0.8827);transform-origin:0 0;">LQ</div>
<div class="t" style="top:391.00px;font-size:10.5px;color:#000;font-weight:bold;letter-spacing:0.536px;left:938.40px;">−12.60</div>
<div class="t" style="top:391.00px;font-size:10.5px;color:#000;font-weight:bold;left:988.00px;">9</div>
<div style="position:absolute;left:90px;top:404px;width:931px;height:15px;box-sizing:border-box;background:#f3f3f3;"></div>
<div style="position:absolute;left:90px;top:404px;width:30px;height:15px;box-sizing:border-box;background:#ffe2e2;"></div>
<div class="t" style="top:406.00px;font-size:10.5px;color:#000;-webkit-text-stroke:0.1px #000;left:94.50px;">4</div>
<div class="t" style="top:406.00px;font-size:10.5px;color:#8c8c8c;letter-spacing:0.205px;-webkit-text-stroke:0.1px #8c8c8c;left:124.20px;">Course #4</div>
<div style="position:absolute;left:304px;top:406px;width:12px;height:12px;box-sizing:border-box;background:linear-gradient(#ffffff,#f0f0f0 30%,#d8d8d8 70%,#ececec);border:1px solid #6e6c7c;border-radius:3px;"></div>
<div class="t" style="top:406.00px;font-size:10.5px;color:#8c8c8c;-webkit-text-stroke:0.1px #8c8c8c;left:332.30px;transform:scaleX(0.8887);transform-origin:0 0;">EBRT</div>
<div class="t" style="top:406.00px;font-size:10.5px;color:#8c8c8c;letter-spacing:0.592px;-webkit-text-stroke:0.1px #8c8c8c;left:387.60px;">6000.0</div>
<div class="t" style="top:406.00px;font-size:10.5px;color:#8c8c8c;letter-spacing:1.129px;-webkit-text-stroke:0.1px #8c8c8c;left:452.40px;">30</div>
<div class="t" style="top:406.00px;font-size:10.5px;color:#8c8c8c;letter-spacing:0.598px;-webkit-text-stroke:0.1px #8c8c8c;left:497.40px;">200.0</div>
<div class="t" style="top:406.00px;font-size:10.5px;color:#8c8c8c;letter-spacing:0.387px;-webkit-text-stroke:0.1px #8c8c8c;left:562.70px;">Oct 17, 2014</div>
<div class="t" style="top:406.00px;font-size:10.5px;color:#8c8c8c;letter-spacing:0.387px;-webkit-text-stroke:0.1px #8c8c8c;left:652.90px;">Dec 1, 2014</div>
<div class="t" style="top:406.00px;font-size:10.5px;color:#8c8c8c;letter-spacing:0.516px;-webkit-text-stroke:0.1px #8c8c8c;left:742.60px;">46(45)</div>
<div class="t" style="top:406.00px;font-size:10.5px;color:#8c8c8c;letter-spacing:0.598px;-webkit-text-stroke:0.1px #8c8c8c;left:787.60px;">56.70</div>
<div class="t" style="top:406.00px;font-size:10.5px;color:#8c8c8c;-webkit-text-stroke:0.1px #8c8c8c;left:822.80px;transform:scaleX(0.8827);transform-origin:0 0;">LQ</div>
<div class="t" style="top:406.00px;font-size:10.5px;color:#8c8c8c;letter-spacing:0.592px;-webkit-text-stroke:0.1px #8c8c8c;left:862.40px;">100.00</div>
<div class="t" style="top:406.00px;font-size:10.5px;color:#8c8c8c;-webkit-text-stroke:0.1px #8c8c8c;left:903.50px;transform:scaleX(0.8827);transform-origin:0 0;">LQ</div>
<div class="t" style="top:406.00px;font-size:10.5px;color:#8c8c8c;letter-spacing:0.536px;-webkit-text-stroke:0.1px #8c8c8c;left:938.40px;">−15.30</div>
<div class="t" style="top:406.00px;font-size:10.5px;color:#8c8c8c;-webkit-text-stroke:0.1px #8c8c8c;left:988.00px;">0</div>
<div style="position:absolute;left:90px;top:419px;width:931px;height:15px;box-sizing:border-box;background:#ffffff;"></div>
<div style="position:absolute;left:90px;top:419px;width:30px;height:15px;box-sizing:border-box;background:#ebc8a0;"></div>
<div class="t" style="top:421.00px;font-size:10.5px;color:#000;-webkit-text-stroke:0.1px #000;left:94.50px;">5</div>
<div class="t" style="top:421.00px;font-size:10.5px;color:#8c8c8c;letter-spacing:0.205px;-webkit-text-stroke:0.1px #8c8c8c;left:124.20px;">Course #5</div>
<div style="position:absolute;left:304px;top:421px;width:12px;height:12px;box-sizing:border-box;background:linear-gradient(#ffffff,#f0f0f0 30%,#d8d8d8 70%,#ececec);border:1px solid #6e6c7c;border-radius:3px;"></div>
<div class="t" style="top:421.00px;font-size:10.5px;color:#8c8c8c;-webkit-text-stroke:0.1px #8c8c8c;left:332.30px;transform:scaleX(0.8887);transform-origin:0 0;">EBRT</div>
<div class="t" style="top:421.00px;font-size:10.5px;color:#8c8c8c;letter-spacing:0.592px;-webkit-text-stroke:0.1px #8c8c8c;left:387.60px;">6000.0</div>
<div class="t" style="top:421.00px;font-size:10.5px;color:#8c8c8c;letter-spacing:1.129px;-webkit-text-stroke:0.1px #8c8c8c;left:452.40px;">30</div>
<div class="t" style="top:421.00px;font-size:10.5px;color:#8c8c8c;letter-spacing:0.598px;-webkit-text-stroke:0.1px #8c8c8c;left:497.40px;">200.0</div>
<div class="t" style="top:421.00px;font-size:10.5px;color:#8c8c8c;letter-spacing:0.387px;-webkit-text-stroke:0.1px #8c8c8c;left:562.70px;">Oct 17, 2014</div>
<div class="t" style="top:421.00px;font-size:10.5px;color:#8c8c8c;letter-spacing:0.387px;-webkit-text-stroke:0.1px #8c8c8c;left:652.90px;">Dec 1, 2014</div>
<div class="t" style="top:421.00px;font-size:10.5px;color:#8c8c8c;letter-spacing:0.516px;-webkit-text-stroke:0.1px #8c8c8c;left:742.60px;">46(45)</div>
<div class="t" style="top:421.00px;font-size:10.5px;color:#8c8c8c;letter-spacing:0.598px;-webkit-text-stroke:0.1px #8c8c8c;left:787.60px;">56.70</div>
<div class="t" style="top:421.00px;font-size:10.5px;color:#8c8c8c;-webkit-text-stroke:0.1px #8c8c8c;left:822.80px;transform:scaleX(0.8827);transform-origin:0 0;">LQ</div>
<div class="t" style="top:421.00px;font-size:10.5px;color:#8c8c8c;letter-spacing:0.592px;-webkit-text-stroke:0.1px #8c8c8c;left:862.40px;">100.00</div>
<div class="t" style="top:421.00px;font-size:10.5px;color:#8c8c8c;-webkit-text-stroke:0.1px #8c8c8c;left:903.50px;transform:scaleX(0.8827);transform-origin:0 0;">LQ</div>
<div class="t" style="top:421.00px;font-size:10.5px;color:#8c8c8c;letter-spacing:0.536px;-webkit-text-stroke:0.1px #8c8c8c;left:938.40px;">−15.30</div>
<div class="t" style="top:421.00px;font-size:10.5px;color:#8c8c8c;-webkit-text-stroke:0.1px #8c8c8c;left:988.00px;">0</div>
<div style="position:absolute;left:90px;top:434px;width:931px;height:15px;box-sizing:border-box;background:#f3f3f3;"></div>
<div style="position:absolute;left:90px;top:434px;width:30px;height:15px;box-sizing:border-box;background:#d2e2cc;"></div>
<div class="t" style="top:436.00px;font-size:10.5px;color:#000;-webkit-text-stroke:0.1px #000;left:94.50px;">6</div>
<div class="t" style="top:436.00px;font-size:10.5px;color:#8c8c8c;letter-spacing:0.205px;-webkit-text-stroke:0.1px #8c8c8c;left:124.20px;">Course #6</div>
<div style="position:absolute;left:304px;top:436px;width:12px;height:12px;box-sizing:border-box;background:linear-gradient(#ffffff,#f0f0f0 30%,#d8d8d8 70%,#ececec);border:1px solid #6e6c7c;border-radius:3px;"></div>
<div class="t" style="top:436.00px;font-size:10.5px;color:#8c8c8c;-webkit-text-stroke:0.1px #8c8c8c;left:332.30px;transform:scaleX(0.8887);transform-origin:0 0;">EBRT</div>
<div class="t" style="top:436.00px;font-size:10.5px;color:#8c8c8c;letter-spacing:0.592px;-webkit-text-stroke:0.1px #8c8c8c;left:387.60px;">6000.0</div>
<div class="t" style="top:436.00px;font-size:10.5px;color:#8c8c8c;letter-spacing:1.129px;-webkit-text-stroke:0.1px #8c8c8c;left:452.40px;">30</div>
<div class="t" style="top:436.00px;font-size:10.5px;color:#8c8c8c;letter-spacing:0.598px;-webkit-text-stroke:0.1px #8c8c8c;left:497.40px;">200.0</div>
<div class="t" style="top:436.00px;font-size:10.5px;color:#8c8c8c;letter-spacing:0.387px;-webkit-text-stroke:0.1px #8c8c8c;left:562.70px;">Oct 17, 2014</div>
<div class="t" style="top:436.00px;font-size:10.5px;color:#8c8c8c;letter-spacing:0.387px;-webkit-text-stroke:0.1px #8c8c8c;left:652.90px;">Dec 1, 2014</div>
<div class="t" style="top:436.00px;font-size:10.5px;color:#8c8c8c;letter-spacing:0.516px;-webkit-text-stroke:0.1px #8c8c8c;left:742.60px;">46(45)</div>
<div class="t" style="top:436.00px;font-size:10.5px;color:#8c8c8c;letter-spacing:0.598px;-webkit-text-stroke:0.1px #8c8c8c;left:787.60px;">56.70</div>
<div class="t" style="top:436.00px;font-size:10.5px;color:#8c8c8c;-webkit-text-stroke:0.1px #8c8c8c;left:822.80px;transform:scaleX(0.8827);transform-origin:0 0;">LQ</div>
<div class="t" style="top:436.00px;font-size:10.5px;color:#8c8c8c;letter-spacing:0.592px;-webkit-text-stroke:0.1px #8c8c8c;left:862.40px;">100.00</div>
<div class="t" style="top:436.00px;font-size:10.5px;color:#8c8c8c;-webkit-text-stroke:0.1px #8c8c8c;left:903.50px;transform:scaleX(0.8827);transform-origin:0 0;">LQ</div>
<div class="t" style="top:436.00px;font-size:10.5px;color:#8c8c8c;letter-spacing:0.536px;-webkit-text-stroke:0.1px #8c8c8c;left:938.40px;">−15.30</div>
<div class="t" style="top:436.00px;font-size:10.5px;color:#8c8c8c;-webkit-text-stroke:0.1px #8c8c8c;left:988.00px;">0</div>
<div style="position:absolute;left:90px;top:449px;width:931px;height:15px;box-sizing:border-box;background:#ffffff;"></div>
<div style="position:absolute;left:90px;top:449px;width:30px;height:15px;box-sizing:border-box;background:#dcfefe;"></div>
<div class="t" style="top:451.00px;font-size:10.5px;color:#000;-webkit-text-stroke:0.1px #000;left:94.50px;">7</div>
<div class="t" style="top:451.00px;font-size:10.5px;color:#8c8c8c;letter-spacing:0.205px;-webkit-text-stroke:0.1px #8c8c8c;left:124.20px;">Course #7</div>
<div style="position:absolute;left:304px;top:451px;width:12px;height:12px;box-sizing:border-box;background:linear-gradient(#ffffff,#f0f0f0 30%,#d8d8d8 70%,#ececec);border:1px solid #6e6c7c;border-radius:3px;"></div>
<div class="t" style="top:451.00px;font-size:10.5px;color:#8c8c8c;-webkit-text-stroke:0.1px #8c8c8c;left:332.30px;transform:scaleX(0.8887);transform-origin:0 0;">EBRT</div>
<div class="t" style="top:451.00px;font-size:10.5px;color:#8c8c8c;letter-spacing:0.592px;-webkit-text-stroke:0.1px #8c8c8c;left:387.60px;">6000.0</div>
<div class="t" style="top:451.00px;font-size:10.5px;color:#8c8c8c;letter-spacing:1.129px;-webkit-text-stroke:0.1px #8c8c8c;left:452.40px;">30</div>
<div class="t" style="top:451.00px;font-size:10.5px;color:#8c8c8c;letter-spacing:0.598px;-webkit-text-stroke:0.1px #8c8c8c;left:497.40px;">200.0</div>
<div class="t" style="top:451.00px;font-size:10.5px;color:#8c8c8c;letter-spacing:0.387px;-webkit-text-stroke:0.1px #8c8c8c;left:562.70px;">Oct 17, 2014</div>
<div class="t" style="top:451.00px;font-size:10.5px;color:#8c8c8c;letter-spacing:0.387px;-webkit-text-stroke:0.1px #8c8c8c;left:652.90px;">Dec 1, 2014</div>
<div class="t" style="top:451.00px;font-size:10.5px;color:#8c8c8c;letter-spacing:0.516px;-webkit-text-stroke:0.1px #8c8c8c;left:742.60px;">46(45)</div>
<div class="t" style="top:451.00px;font-size:10.5px;color:#8c8c8c;letter-spacing:0.598px;-webkit-text-stroke:0.1px #8c8c8c;left:787.60px;">56.70</div>
<div class="t" style="top:451.00px;font-size:10.5px;color:#8c8c8c;-webkit-text-stroke:0.1px #8c8c8c;left:822.80px;transform:scaleX(0.8827);transform-origin:0 0;">LQ</div>
<div class="t" style="top:451.00px;font-size:10.5px;color:#8c8c8c;letter-spacing:0.592px;-webkit-text-stroke:0.1px #8c8c8c;left:862.40px;">100.00</div>
<div class="t" style="top:451.00px;font-size:10.5px;color:#8c8c8c;-webkit-text-stroke:0.1px #8c8c8c;left:903.50px;transform:scaleX(0.8827);transform-origin:0 0;">LQ</div>
<div class="t" style="top:451.00px;font-size:10.5px;color:#8c8c8c;letter-spacing:0.536px;-webkit-text-stroke:0.1px #8c8c8c;left:938.40px;">−15.30</div>
<div class="t" style="top:451.00px;font-size:10.5px;color:#8c8c8c;-webkit-text-stroke:0.1px #8c8c8c;left:988.00px;">0</div>
<div style="position:absolute;left:90px;top:464px;width:931px;height:15px;box-sizing:border-box;background:#f3f3f3;"></div>
<div style="position:absolute;left:90px;top:464px;width:30px;height:15px;box-sizing:border-box;background:#f0d2f0;"></div>
<div class="t" style="top:466.00px;font-size:10.5px;color:#000;-webkit-text-stroke:0.1px #000;left:94.50px;">8</div>
<div class="t" style="top:466.00px;font-size:10.5px;color:#8c8c8c;letter-spacing:0.205px;-webkit-text-stroke:0.1px #8c8c8c;left:124.20px;">Course #8</div>
<div style="position:absolute;left:304px;top:466px;width:12px;height:12px;box-sizing:border-box;background:linear-gradient(#ffffff,#f0f0f0 30%,#d8d8d8 70%,#ececec);border:1px solid #6e6c7c;border-radius:3px;"></div>
<div class="t" style="top:466.00px;font-size:10.5px;color:#8c8c8c;-webkit-text-stroke:0.1px #8c8c8c;left:332.30px;transform:scaleX(0.8887);transform-origin:0 0;">EBRT</div>
<div class="t" style="top:466.00px;font-size:10.5px;color:#8c8c8c;letter-spacing:0.592px;-webkit-text-stroke:0.1px #8c8c8c;left:387.60px;">6000.0</div>
<div class="t" style="top:466.00px;font-size:10.5px;color:#8c8c8c;letter-spacing:1.129px;-webkit-text-stroke:0.1px #8c8c8c;left:452.40px;">30</div>
<div class="t" style="top:466.00px;font-size:10.5px;color:#8c8c8c;letter-spacing:0.598px;-webkit-text-stroke:0.1px #8c8c8c;left:497.40px;">200.0</div>
<div class="t" style="top:466.00px;font-size:10.5px;color:#8c8c8c;letter-spacing:0.387px;-webkit-text-stroke:0.1px #8c8c8c;left:562.70px;">Oct 17, 2014</div>
<div class="t" style="top:466.00px;font-size:10.5px;color:#8c8c8c;letter-spacing:0.387px;-webkit-text-stroke:0.1px #8c8c8c;left:652.90px;">Dec 1, 2014</div>
<div class="t" style="top:466.00px;font-size:10.5px;color:#8c8c8c;letter-spacing:0.516px;-webkit-text-stroke:0.1px #8c8c8c;left:742.60px;">46(45)</div>
<div class="t" style="top:466.00px;font-size:10.5px;color:#8c8c8c;letter-spacing:0.598px;-webkit-text-stroke:0.1px #8c8c8c;left:787.60px;">56.70</div>
<div class="t" style="top:466.00px;font-size:10.5px;color:#8c8c8c;-webkit-text-stroke:0.1px #8c8c8c;left:822.80px;transform:scaleX(0.8827);transform-origin:0 0;">LQ</div>
<div class="t" style="top:466.00px;font-size:10.5px;color:#8c8c8c;letter-spacing:0.592px;-webkit-text-stroke:0.1px #8c8c8c;left:862.40px;">100.00</div>
<div class="t" style="top:466.00px;font-size:10.5px;color:#8c8c8c;-webkit-text-stroke:0.1px #8c8c8c;left:903.50px;transform:scaleX(0.8827);transform-origin:0 0;">LQ</div>
<div class="t" style="top:466.00px;font-size:10.5px;color:#8c8c8c;letter-spacing:0.536px;-webkit-text-stroke:0.1px #8c8c8c;left:938.40px;">−15.30</div>
<div class="t" style="top:466.00px;font-size:10.5px;color:#8c8c8c;-webkit-text-stroke:0.1px #8c8c8c;left:988.00px;">0</div>
<div style="position:absolute;left:90px;top:483px;width:931px;height:1px;box-sizing:border-box;background:#c8c8c8;"></div>
<div class="t" style="top:486.00px;font-size:10.5px;color:#000;letter-spacing:0.265px;-webkit-text-stroke:0.1px #000;left:124.20px;">Total</div>
<div class="t" style="top:486.00px;font-size:10.5px;color:#000;letter-spacing:0.592px;-webkit-text-stroke:0.1px #000;left:387.60px;">7000.0</div>
<div class="t" style="top:486.00px;font-size:10.5px;color:#000;letter-spacing:1.129px;-webkit-text-stroke:0.1px #000;left:452.40px;">35</div>
<div class="t" style="top:486.00px;font-size:10.5px;color:#000;letter-spacing:0.403px;-webkit-text-stroke:0.1px #000;left:562.70px;">Feb 2, 2015</div>
<div class="t" style="top:486.00px;font-size:10.5px;color:#000;letter-spacing:0.385px;-webkit-text-stroke:0.1px #000;left:652.90px;">Mar 27, 2015</div>
<div class="t" style="top:486.00px;font-size:10.5px;color:#000;letter-spacing:1.129px;-webkit-text-stroke:0.1px #000;left:742.60px;">54</div>
<div class="t" style="top:486.00px;font-size:10.5px;color:#000;letter-spacing:0.598px;-webkit-text-stroke:0.1px #000;left:787.60px;">61.50</div>
<div class="t" style="top:486.00px;font-size:10.5px;color:#000;letter-spacing:0.747px;-webkit-text-stroke:0.1px #000;left:862.40px;">116.67</div>
<div class="t" style="top:486.00px;font-size:10.5px;color:#000;letter-spacing:0.536px;-webkit-text-stroke:0.1px #000;left:938.40px;">−22.50</div>
<div style="position:absolute;left:89px;top:507px;width:105px;height:22px;box-sizing:border-box;background:linear-gradient(#ffffff,#f7f7f7 50%,#ececec 51%,#f3f3f3);border:1px solid #a3a3a3;border-bottom-color:#8e8e8e;border-radius:4px;box-shadow:0 1px 0 rgba(255,255,255,.4);"></div>
<div class="t" style="top:512.00px;font-size:12px;color:#000;font-weight:bold;letter-spacing:0.407px;left:114.40px;">Course 1</div>
<div style="position:absolute;left:207px;top:507px;width:105px;height:22px;box-sizing:border-box;background:linear-gradient(#ffffff,#f7f7f7 50%,#ececec 51%,#f3f3f3);border:1px solid #a3a3a3;border-bottom-color:#8e8e8e;border-radius:4px;box-shadow:0 1px 0 rgba(255,255,255,.4);"></div>
<div class="t" style="top:512.00px;font-size:12px;color:#000;font-weight:bold;letter-spacing:0.407px;left:232.40px;">Course 2</div>
<div style="position:absolute;left:325px;top:507px;width:105px;height:22px;box-sizing:border-box;background:linear-gradient(#d4d4d4,#d9d9d9 50%,#dcdcdc 51%,#e2e2e2);border:1px solid #a3a3a3;border-bottom-color:#8e8e8e;border-radius:4px;box-shadow:0 1px 0 rgba(255,255,255,.4);"></div>
<div class="t" style="top:512.00px;font-size:12px;color:#000;font-weight:bold;letter-spacing:0.407px;left:350.40px;">Course 3</div>
<div style="position:absolute;left:443px;top:507px;width:105px;height:22px;box-sizing:border-box;background:linear-gradient(#ffffff,#f7f7f7 50%,#ececec 51%,#f3f3f3);border:1px solid #a3a3a3;border-bottom-color:#8e8e8e;border-radius:4px;box-shadow:0 1px 0 rgba(255,255,255,.4);"></div>
<div class="t" style="top:512.00px;font-size:12px;color:#000;font-weight:bold;letter-spacing:0.407px;left:468.40px;">Course 4</div>
<div style="position:absolute;left:562px;top:507px;width:105px;height:22px;box-sizing:border-box;background:linear-gradient(#ffffff,#f7f7f7 50%,#ececec 51%,#f3f3f3);border:1px solid #a3a3a3;border-bottom-color:#8e8e8e;border-radius:4px;box-shadow:0 1px 0 rgba(255,255,255,.4);"></div>
<div class="t" style="top:512.00px;font-size:12px;color:#000;font-weight:bold;letter-spacing:0.407px;left:587.40px;">Course 5</div>
<div style="position:absolute;left:680px;top:507px;width:105px;height:22px;box-sizing:border-box;background:linear-gradient(#ffffff,#f7f7f7 50%,#ececec 51%,#f3f3f3);border:1px solid #a3a3a3;border-bottom-color:#8e8e8e;border-radius:4px;box-shadow:0 1px 0 rgba(255,255,255,.4);"></div>
<div class="t" style="top:512.00px;font-size:12px;color:#000;font-weight:bold;letter-spacing:0.407px;left:705.40px;">Course 6</div>
<div style="position:absolute;left:799px;top:507px;width:105px;height:22px;box-sizing:border-box;background:linear-gradient(#ffffff,#f7f7f7 50%,#ececec 51%,#f3f3f3);border:1px solid #a3a3a3;border-bottom-color:#8e8e8e;border-radius:4px;box-shadow:0 1px 0 rgba(255,255,255,.4);"></div>
<div class="t" style="top:512.00px;font-size:12px;color:#000;font-weight:bold;letter-spacing:0.407px;left:824.40px;">Course 7</div>
<div style="position:absolute;left:918px;top:507px;width:105px;height:22px;box-sizing:border-box;background:linear-gradient(#ffffff,#f7f7f7 50%,#ececec 51%,#f3f3f3);border:1px solid #a3a3a3;border-bottom-color:#8e8e8e;border-radius:4px;box-shadow:0 1px 0 rgba(255,255,255,.4);"></div>
<div class="t" style="top:512.00px;font-size:12px;color:#000;font-weight:bold;letter-spacing:0.407px;left:943.40px;">Course 8</div>
<div class="t" style="top:543.00px;font-size:12.5px;color:#000;letter-spacing:0.111px;-webkit-text-stroke:0.25px #000;left:89.00px;">Title:</div>
<div style="position:absolute;left:130px;top:538px;width:270px;height:20px;box-sizing:border-box;background:#c8e2fa;border:1px solid #b4b4b4;border-top-color:#8c8c8c;box-shadow:inset 0 1px 0 #e6e6e6;"></div>
<div class="t" style="top:544.00px;font-size:12.5px;color:#000;letter-spacing:0.346px;-webkit-text-stroke:0.25px #000;left:133.90px;">After gap: 5 x 2Gy makeup</div>
<svg style="position:absolute;left:406.5px;top:544.5px" width="10" height="7"><path d="M0 0 L10 0 L5 6 Z" fill="#404040"/></svg>
<div class="t" style="top:543.00px;font-size:12.5px;color:#000;letter-spacing:0.310px;-webkit-text-stroke:0.25px #000;left:438.90px;">Modality:</div>
<div style="position:absolute;left:502px;top:538px;width:105px;height:20px;box-sizing:border-box;background:linear-gradient(#ffffff,#f7f7f7 50%,#ececec 51%,#f3f3f3);border:1px solid #a3a3a3;border-bottom-color:#8e8e8e;border-radius:4px;box-shadow:0 1px 0 rgba(255,255,255,.4);"></div>
<svg style="position:absolute;left:594.0px;top:542.0px" width="7" height="12"><path d="M1 4.5 L3.5 1 L6 4.5 Z M1 7.5 L3.5 11 L6 7.5 Z" fill="#404040"/></svg>
<div class="t" style="top:543.00px;font-size:12.5px;color:#000;-webkit-text-stroke:0.25px #000;left:510.80px;transform:scaleX(0.8547);transform-origin:0 0;">EBRT</div>
<div style="position:absolute;left:683px;top:541px;width:14px;height:14px;box-sizing:border-box;background:linear-gradient(#eef1f5,#d2dae3 35%,#b4c0cd 65%,#dde3ea);border:1px solid #55506a;border-radius:3px;"></div>
<svg style="position:absolute;left:683px;top:537px;overflow:visible" width="18" height="18"><path d="M3.70 9.00 L7.30 13.00 L14.10 2.70" fill="none" stroke="#1a1f2e" stroke-width="2.30" stroke-linecap="round" stroke-linejoin="round"/></svg>
<div class="t" style="top:542.00px;font-size:12.5px;color:#000;letter-spacing:0.149px;-webkit-text-stroke:0.25px #000;left:701.30px;">Include</div>
<div style="position:absolute;left:801px;top:541px;width:14px;height:14px;box-sizing:border-box;background:linear-gradient(#ffffff,#f0f0f0 30%,#d8d8d8 70%,#ececec);border:1px solid #6e6c7c;border-radius:3px;"></div>
<div class="t" style="top:542.00px;font-size:12.5px;color:#000;letter-spacing:0.271px;-webkit-text-stroke:0.25px #000;left:819.10px;">Simulation</div>
<div style="position:absolute;left:920px;top:541px;width:14px;height:14px;box-sizing:border-box;background:linear-gradient(#ffffff,#f0f0f0 30%,#d8d8d8 70%,#ececec);border:1px solid #6e6c7c;border-radius:3px;"></div>
<div class="t" style="top:542.00px;font-size:12.5px;color:#000;letter-spacing:-0.004px;-webkit-text-stroke:0.25px #000;left:937.90px;">RTP complete</div>
<div class="t" style="top:575.00px;font-size:12.5px;color:#000;letter-spacing:0.343px;-webkit-text-stroke:0.25px #000;left:89.20px;">Tx days/week:</div>
<div class="t" style="top:605.00px;font-size:12.5px;color:#000;letter-spacing:0.139px;-webkit-text-stroke:0.25px #000;left:89.20px;">Total dose (cGy):</div>
<div class="t" style="top:635.00px;font-size:12.5px;color:#000;letter-spacing:0.236px;-webkit-text-stroke:0.25px #000;left:89.20px;"># Fractions:</div>
<div class="t" style="top:665.00px;font-size:12.5px;color:#000;letter-spacing:0.133px;-webkit-text-stroke:0.25px #000;left:89.20px;">Rx fraction (cGy):</div>
<div style="position:absolute;left:236px;top:570px;width:60px;height:21px;box-sizing:border-box;background:linear-gradient(#ffffff,#f7f7f7 50%,#ececec 51%,#f3f3f3);border:1px solid #a3a3a3;border-bottom-color:#8e8e8e;border-radius:4px;box-shadow:0 1px 0 rgba(255,255,255,.4);"></div>
<svg style="position:absolute;left:283.0px;top:574.5px" width="7" height="12"><path d="M1 4.5 L3.5 1 L6 4.5 Z M1 7.5 L3.5 11 L6 7.5 Z" fill="#404040"/></svg>
<div class="t" style="top:575.00px;font-size:12.5px;color:#000;-webkit-text-stroke:0.25px #000;left:245.60px;">5</div>
<div class="t" style="top:575.00px;font-size:12.5px;color:#000;letter-spacing:0.092px;-webkit-text-stroke:0.25px #000;left:302.70px;">Sequential</div>
<div style="position:absolute;left:236px;top:600px;width:60px;height:20px;box-sizing:border-box;background:#c8e2fa;border:1px solid #b4b4b4;border-top-color:#8c8c8c;box-shadow:inset 0 1px 0 #e6e6e6;"></div>
<div class="t" style="top:606.00px;font-size:12.5px;color:#000;letter-spacing:0.433px;-webkit-text-stroke:0.25px #000;left:240.50px;">1000.0</div>
<div style="position:absolute;left:236px;top:630px;width:60px;height:20px;box-sizing:border-box;background:#c8e2fa;border:1px solid #b4b4b4;border-top-color:#8c8c8c;box-shadow:inset 0 1px 0 #e6e6e6;"></div>
<div class="t" style="top:636.00px;font-size:12.5px;color:#000;-webkit-text-stroke:0.25px #000;left:240.50px;">5</div>
<div style="position:absolute;left:236px;top:660px;width:60px;height:20px;box-sizing:border-box;background:#cfe6fb;border:1px solid #d0d0d0;border-top-color:#c4c4c4;"></div>
<div class="t" style="top:666.00px;font-size:12.5px;color:#9a9a9a;letter-spacing:0.305px;-webkit-text-stroke:0.25px #9a9a9a;left:240.50px;">200.0</div>
<div style="position:absolute;left:303px;top:599px;width:13px;height:22px;box-sizing:border-box;background:linear-gradient(#fdfdfd,#eeeeee);border:1px solid #9a9a9a;border-radius:5px;"></div>
<svg style="position:absolute;left:303px;top:599px" width="13" height="22"><path d="M3.7 8.2 L6.5 4.5 L9.3 8.2 Z M3.7 13.8 L6.5 17.5 L9.3 13.8 Z" fill="#3c3c3c"/></svg>
<div style="position:absolute;left:303px;top:629px;width:13px;height:22px;box-sizing:border-box;background:linear-gradient(#fdfdfd,#eeeeee);border:1px solid #9a9a9a;border-radius:5px;"></div>
<svg style="position:absolute;left:303px;top:629px" width="13" height="22"><path d="M3.7 8.2 L6.5 4.5 L9.3 8.2 Z M3.7 13.8 L6.5 17.5 L9.3 13.8 Z" fill="#3c3c3c"/></svg>
<div style="position:absolute;left:303px;top:659px;width:13px;height:22px;box-sizing:border-box;background:linear-gradient(#fdfdfd,#eeeeee);border:1px solid #c9c9c9;border-radius:5px;"></div>
<svg style="position:absolute;left:303px;top:659px" width="13" height="22"><path d="M3.7 8.2 L6.5 4.5 L9.3 8.2 Z M3.7 13.8 L6.5 17.5 L9.3 13.8 Z" fill="#a4a4a4"/></svg>
<div style="position:absolute;left:179px;top:633px;width:14px;height:14px;box-sizing:border-box;background:linear-gradient(#ffffff,#f0f0f0 30%,#d8d8d8 70%,#ececec);border:1px solid #6e6c7c;border-radius:3px;"></div>
<div class="t" style="top:634.00px;font-size:12.5px;color:#000;-webkit-text-stroke:0.25px #000;left:197.50px;transform:scaleX(0.8830);transform-origin:0 0;">BID</div>
<div style="position:absolute;left:328.05px;top:602.05px;width:15.5px;height:15.5px;box-sizing:border-box;background:linear-gradient(#ffffff,#f6f6f6 45%,#e4e4e4 55%,#f4f4f4);border:1px solid #8a8a8a;border-radius:50%;"></div>
<div class="t" style="top:604.00px;font-size:12.5px;color:#000;letter-spacing:-0.135px;-webkit-text-stroke:0.25px #000;left:347.40px;">Lock</div>
<div style="position:absolute;left:328.05px;top:632.05px;width:15.5px;height:15.5px;box-sizing:border-box;background:linear-gradient(#ffffff,#f6f6f6 45%,#e4e4e4 55%,#f4f4f4);border:1px solid #8a8a8a;border-radius:50%;"></div>
<div class="t" style="top:634.00px;font-size:12.5px;color:#000;letter-spacing:-0.135px;-webkit-text-stroke:0.25px #000;left:347.40px;">Lock</div>
<div style="position:absolute;left:328.05px;top:662.05px;width:15.5px;height:15.5px;box-sizing:border-box;background:linear-gradient(#eef1f4,#d0d7df 40%,#aeb9c6 60%,#dfe4ea);border:1px solid #5a5c70;border-radius:50%;"></div>
<div style="position:absolute;left:333.0px;top:667.0px;width:5.600000000000023px;height:5.599999999999909px;box-sizing:border-box;background:#111;border-radius:50%;"></div>
<div class="t" style="top:664.00px;font-size:12.5px;color:#000;letter-spacing:-0.135px;-webkit-text-stroke:0.25px #000;left:347.40px;">Lock</div>
<div style="position:absolute;left:399px;top:598px;width:280px;height:53px;box-sizing:border-box;background:#dcdcdc;border:1px solid #c6c6c6;border-radius:4px;"></div>
<div style="position:absolute;left:407px;top:608px;width:264px;height:38px;box-sizing:border-box;background:#c8e2fa;"></div>
<div class="t" style="top:609.00px;font-size:10.5px;color:#000;letter-spacing:0.108px;-webkit-text-stroke:0.1px #000;left:412.20px;">BEDn from Course 3 will be summed with BEDn</div>
<div class="t" style="top:621.00px;font-size:10.5px;color:#000;letter-spacing:0.294px;-webkit-text-stroke:0.1px #000;left:412.20px;">from other included courses in the calculation of</div>
<div class="t" style="top:632.00px;font-size:10.5px;color:#000;letter-spacing:-0.097px;-webkit-text-stroke:0.1px #000;left:412.20px;">total BED.</div>
<div class="t" style="top:665.00px;font-size:12.5px;color:#000;letter-spacing:0.191px;-webkit-text-stroke:0.25px #000;left:409.60px;">Calculate dose to:</div>
<div style="position:absolute;left:522px;top:660px;width:60px;height:20px;box-sizing:border-box;background:#c8e2fa;border:1px solid #b4b4b4;border-top-color:#8c8c8c;box-shadow:inset 0 1px 0 #e6e6e6;"></div>
<div class="t" style="top:666.00px;font-size:12.5px;color:#000;letter-spacing:0.330px;-webkit-text-stroke:0.25px #000;left:526.60px;">100.0</div>
<div style="position:absolute;left:590px;top:659px;width:13px;height:22px;box-sizing:border-box;background:linear-gradient(#fdfdfd,#eeeeee);border:1px solid #9a9a9a;border-radius:5px;"></div>
<svg style="position:absolute;left:590px;top:659px" width="13" height="22"><path d="M3.7 8.2 L6.5 4.5 L9.3 8.2 Z M3.7 13.8 L6.5 17.5 L9.3 13.8 Z" fill="#3c3c3c"/></svg>
<div class="t" style="top:665.00px;font-size:12.5px;color:#000;letter-spacing:0.059px;-webkit-text-stroke:0.25px #000;left:610.00px;">% of the Rx</div>
<div class="t" style="top:635.00px;font-size:12.5px;color:#000;-webkit-text-stroke:0.25px #000;left:781.80px;transform:scaleX(0.8363);transform-origin:0 0;">RBE:</div>
<div style="position:absolute;left:818px;top:630px;width:59px;height:20px;box-sizing:border-box;background:#c8e2fa;border:1px solid #b4b4b4;border-top-color:#8c8c8c;box-shadow:inset 0 1px 0 #e6e6e6;"></div>
<div class="t" style="top:636.00px;font-size:12.5px;color:#000;letter-spacing:0.524px;-webkit-text-stroke:0.25px #000;left:822.10px;">1.00</div>
<div style="position:absolute;left:885px;top:629px;width:13px;height:22px;box-sizing:border-box;background:linear-gradient(#fdfdfd,#eeeeee);border:1px solid #9a9a9a;border-radius:5px;"></div>
<svg style="position:absolute;left:885px;top:629px" width="13" height="22"><path d="M3.7 8.2 L6.5 4.5 L9.3 8.2 Z M3.7 13.8 L6.5 17.5 L9.3 13.8 Z" fill="#3c3c3c"/></svg>
<div class="t" style="top:665.00px;font-size:12.5px;color:#000;letter-spacing:-0.006px;-webkit-text-stroke:0.25px #000;left:713.70px;">Rx to % isodose:</div>
<div style="position:absolute;left:817px;top:660px;width:60px;height:20px;box-sizing:border-box;background:#c8e2fa;border:1px solid #b4b4b4;border-top-color:#8c8c8c;box-shadow:inset 0 1px 0 #e6e6e6;"></div>
<div class="t" style="top:666.00px;font-size:12.5px;color:#000;letter-spacing:0.555px;-webkit-text-stroke:0.25px #000;left:821.50px;">100.0</div>
<div style="position:absolute;left:884px;top:659px;width:13px;height:22px;box-sizing:border-box;background:linear-gradient(#fdfdfd,#eeeeee);border:1px solid #9a9a9a;border-radius:5px;"></div>
<svg style="position:absolute;left:884px;top:659px" width="13" height="22"><path d="M3.7 8.2 L6.5 4.5 L9.3 8.2 Z M3.7 13.8 L6.5 17.5 L9.3 13.8 Z" fill="#3c3c3c"/></svg>
<div class="t" style="top:664.00px;font-size:10.5px;color:#000;letter-spacing:0.287px;-webkit-text-stroke:0.1px #000;left:908.50px;">Dose/frac = 200.0 cGy</div>
<div style="position:absolute;left:77px;top:703px;width:80px;height:21px;box-sizing:border-box;background:linear-gradient(#ffffff,#f7f7f7 50%,#ececec 51%,#f3f3f3);border:1px solid #a3a3a3;border-bottom-color:#8e8e8e;border-radius:4px;box-shadow:0 1px 0 rgba(255,255,255,.4);"></div>
<div class="t" style="top:707.00px;font-size:12.5px;color:#000;letter-spacing:0.224px;-webkit-text-stroke:0.25px #000;left:103.40px;">Print</div>
<div style="position:absolute;left:167px;top:703px;width:100px;height:21px;box-sizing:border-box;background:linear-gradient(#ffffff,#f7f7f7 50%,#ececec 51%,#f3f3f3);border:1px solid #a3a3a3;border-bottom-color:#8e8e8e;border-radius:4px;box-shadow:0 1px 0 rgba(255,255,255,.4);"></div>
<div class="t" style="top:707.00px;font-size:12.5px;color:#000;letter-spacing:-0.058px;-webkit-text-stroke:0.25px #000;left:185.30px;">User Guide</div>
<div style="position:absolute;left:279px;top:701px;width:155px;height:24px;box-sizing:border-box;background:linear-gradient(#ffffff,#f7f7f7 50%,#ececec 51%,#f3f3f3);border:1px solid #a3a3a3;border-bottom-color:#8e8e8e;border-radius:4px;box-shadow:0 1px 0 rgba(255,255,255,.4);"></div>
<svg style="position:absolute;left:287px;top:705px" width="12" height="16"><path d="M0.5 0.5 H8 L11.5 4 V15.5 H0.5 Z" fill="#fcfcfc" stroke="#8a8a8a"/><path d="M8 0.5 V4 H11.5" fill="#e0e0e0" stroke="#8a8a8a"/></svg>
<div class="t" style="top:707.00px;font-size:12.5px;color:#000;letter-spacing:0.120px;-webkit-text-stroke:0.25px #000;left:305.30px;">Document Preview</div>
<div style="position:absolute;left:444px;top:701px;width:155px;height:24px;box-sizing:border-box;background:linear-gradient(#ffffff,#f7f7f7 50%,#ececec 51%,#f3f3f3);border:1px solid #a3a3a3;border-bottom-color:#8e8e8e;border-radius:4px;box-shadow:0 1px 0 rgba(255,255,255,.4);"></div>
<svg style="position:absolute;left:451px;top:704px" width="15" height="15"><path d="M1 5.5 H13 L13.5 13 Q9 14.5 1.5 14.5 Z" fill="#fbfbfb" stroke="#555" stroke-width="0.8"/><rect x="0.8" y="2" width="12.2" height="4.2" fill="#d93a3a"/><rect x="0.8" y="2" width="12.2" height="1.2" fill="#f07070"/><rect x="2.8" y="0.5" width="0.9" height="3" fill="#777"/><rect x="9.3" y="0.5" width="0.9" height="3" fill="#777"/><text x="7" y="12" font-size="6.5" font-family="Liberation Sans" font-weight="bold" text-anchor="middle" fill="#111">17</text></svg>
<div class="t" style="top:707.00px;font-size:12.5px;color:#000;letter-spacing:0.057px;-webkit-text-stroke:0.25px #000;left:470.40px;">Course Calendar</div>
<div style="position:absolute;left:609px;top:701px;width:155px;height:24px;box-sizing:border-box;background:linear-gradient(#ffffff,#f7f7f7 50%,#ececec 51%,#f3f3f3);border:1px solid #a3a3a3;border-bottom-color:#8e8e8e;border-radius:4px;box-shadow:0 1px 0 rgba(255,255,255,.4);"></div>
<svg style="position:absolute;left:617.5px;top:705.5px" width="13" height="13"><path d="M0.8 2.8 V9.8 A5.7 2.2 0 0 0 12.2 9.8 V2.8" fill="#f2f2f2" stroke="#8a8a8a" stroke-width="1"/><ellipse cx="6.5" cy="2.8" rx="5.7" ry="2.2" fill="#dedede" stroke="#8a8a8a" stroke-width="1"/><path d="M0.8 5.3 A5.7 2.2 0 0 0 12.2 5.3 M0.8 7.6 A5.7 2.2 0 0 0 12.2 7.6" fill="none" stroke="#8a8a8a" stroke-width="1"/></svg>
<div class="t" style="top:707.00px;font-size:12.5px;color:#000;letter-spacing:0.033px;-webkit-text-stroke:0.25px #000;left:635.20px;">Patient Database</div>
<div style="position:absolute;left:777px;top:703px;width:150px;height:21px;box-sizing:border-box;background:linear-gradient(#ffffff,#f7f7f7 50%,#ececec 51%,#f3f3f3);border:1px solid #a3a3a3;border-bottom-color:#8e8e8e;border-radius:4px;box-shadow:0 1px 0 rgba(255,255,255,.4);"></div>
<div class="t" style="top:707.00px;font-size:12px;color:#000;font-weight:bold;letter-spacing:0.348px;left:799.40px;">Save to Database</div>
<div style="position:absolute;left:937px;top:703px;width:100px;height:21px;box-sizing:border-box;background:linear-gradient(#ffffff,#f7f7f7 50%,#ececec 51%,#f3f3f3);border:1px solid #a3a3a3;border-bottom-color:#8e8e8e;border-radius:4px;box-shadow:0 1px 0 rgba(255,255,255,.4);"></div>
<div class="t" style="top:707.00px;font-size:12.5px;color:#000;letter-spacing:-0.010px;-webkit-text-stroke:0.25px #000;left:953.50px;">New Patient</div>
</body></html>
